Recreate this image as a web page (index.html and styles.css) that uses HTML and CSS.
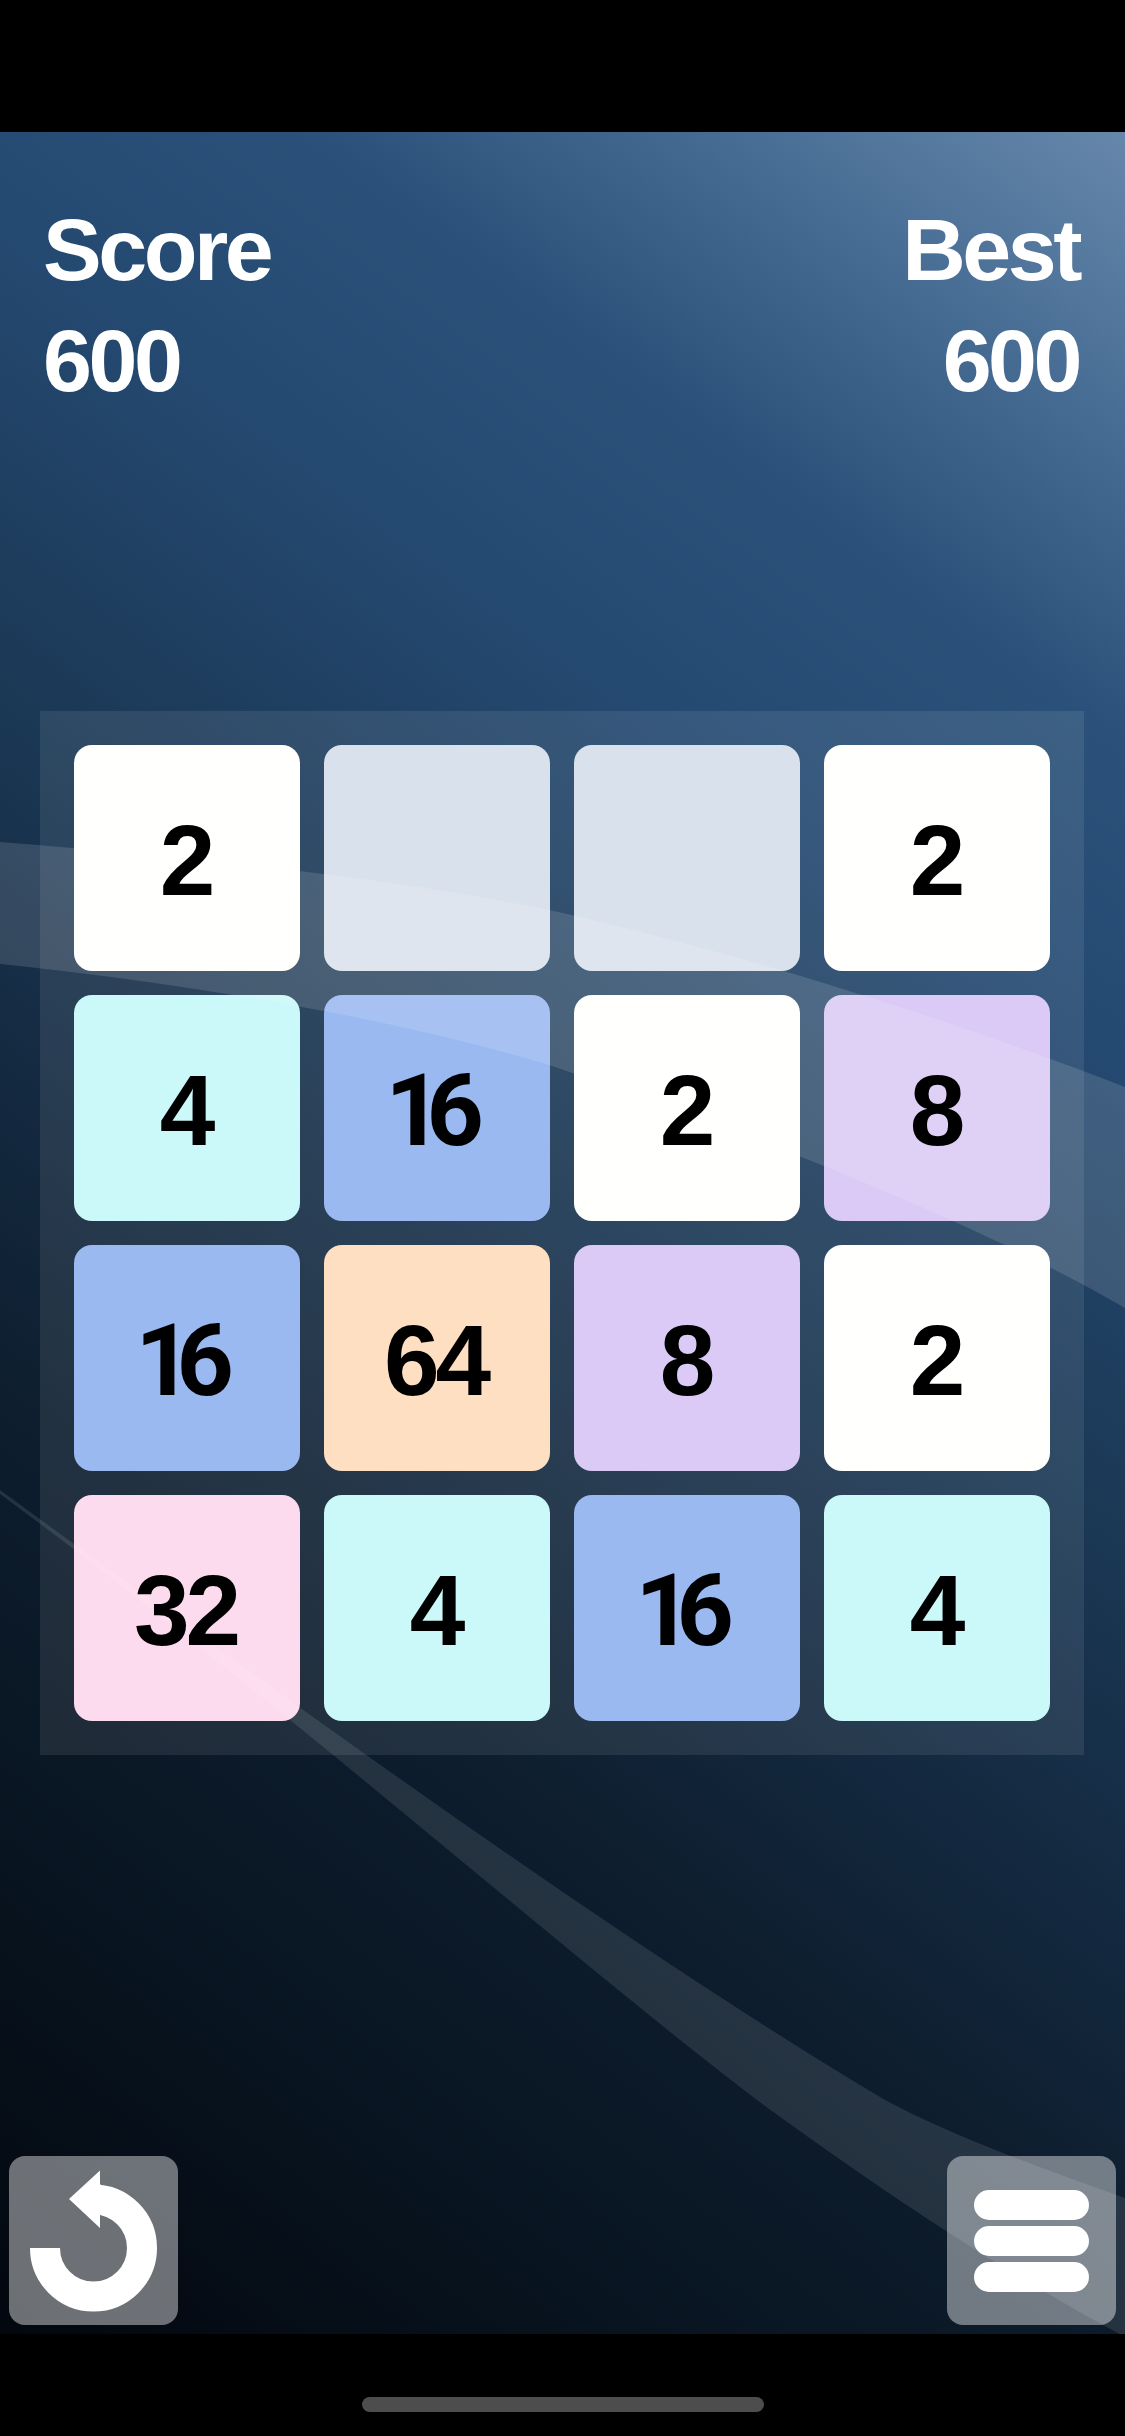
FILE: index.html
```html
<!DOCTYPE html>
<html lang="en">
<head>
<meta charset="utf-8">
<title>2048</title>
<link rel="stylesheet" href="styles.css">
</head>
<body>
<div class="status-bar"></div>
<main class="screen">
  <header class="scores">
    <div class="score-block">
      <div>Score</div>
      <div>600</div>
    </div>
    <div class="score-block score-block-right">
      <div>Best</div>
      <div>600</div>
    </div>
  </header>
  <section class="board">
    <div class="tile t2"><span>2</span></div>
    <div class="tile empty"></div>
    <div class="tile empty"></div>
    <div class="tile t2"><span>2</span></div>
    <div class="tile t4"><span>4</span></div>
    <div class="tile t16"><span>16</span></div>
    <div class="tile t2"><span>2</span></div>
    <div class="tile t8"><span>8</span></div>
    <div class="tile t16"><span>16</span></div>
    <div class="tile t64"><span>64</span></div>
    <div class="tile t8"><span>8</span></div>
    <div class="tile t2"><span>2</span></div>
    <div class="tile t32"><span>32</span></div>
    <div class="tile t4"><span>4</span></div>
    <div class="tile t16"><span>16</span></div>
    <div class="tile t4"><span>4</span></div>
  </section>
  <footer class="controls">
    <button class="ctrl" type="button" aria-label="Undo">
      <svg class="undo-icon" viewBox="0 0 169 169" width="169" height="169">
        <path class="undo-ring" d="M36 92 A48.500 48.500 0 1 0 84.500 43.500 L92 43.500"/>
        <polygon class="undo-head" points="60,43 91,14.500 91,72"/>
      </svg>
    </button>
    <button class="ctrl menu" type="button" aria-label="Menu">
      <span class="bar"></span>
      <span class="bar"></span>
      <span class="bar"></span>
    </button>
  </footer>
  <svg class="swooshes" viewBox="0 132 1125 2202" width="1125" height="2202" aria-hidden="true">
    <path class="swoosh-a" d="M0 842 C200 858 420 880 580 917 C700 945 900 1000 1125 1087 L1125 1308 C1000 1235 800 1150 549 1065 C400 1020 200 985 0 964 Z"/>
    <path class="swoosh-b" d="M0 1490 C250 1672 600 1930 885 2100 C950 2135 1040 2168 1125 2198 L1125 2337 C1000 2270 880 2190 757 2100 C560 1950 280 1700 0 1494 Z"/>
  </svg>
</main>
<div class="home-area"><div class="home-bar"></div></div>
</body>
</html>
```
FILE: styles.css
```css
* { box-sizing: border-box; }

html, body {
  margin: 0;
  padding: 0;
  background: #000;
}

body {
  width: 1125px;
  height: 2436px;
  overflow: hidden;
  font-family: "Liberation Sans", Arial, sans-serif;
  font-weight: 700;
}

.status-bar {
  height: 132px;
  background: #000;
}

.screen {
  position: relative;
  display: flex;
  flex-direction: column;
  height: 2202px;
  background: linear-gradient(217deg,
    #6687aa 0%,
    #4a6f96 9%,
    #2b517a 20%,
    #254a72 30%,
    #1b3855 46%,
    #142a41 58%,
    #0e1e2f 69%,
    #081420 84%,
    #03070e 100%);
}

.scores {
  display: flex;
  justify-content: space-between;
  padding: 62px 46px 0 43px;
  color: #fff;
  font-size: 88px;
  line-height: 111px;
  letter-spacing: -3.500px;
}

.score-block-right { text-align: right; }

.board {
  display: grid;
  grid-template-columns: repeat(4, 226px);
  grid-auto-rows: 226px;
  gap: 24px;
  width: 1044px;
  height: 1044px;
  margin: 295px 0 0 40px;
  padding: 34px;
  background: rgba(255, 255, 255, 0.085);
}

.tile {
  display: flex;
  align-items: center;
  justify-content: center;
  padding: 5px 3px 0 0;
  border-radius: 18px;
  color: #000;
  font-size: 100px;
  letter-spacing: -4px;
}

.tile span {
  position: relative;
  z-index: 2;
}

.empty { background: #d9e2ec; }
.t2 { background: #fffffd; }
.t4 { background: #cbf8f8; }
.t8 { background: #dbcaf5; }
.t16 {
  padding-right: 21px;
  background: #9ab9f0;
  font-family: Roboto, "Liberation Sans", sans-serif;
  letter-spacing: -16px;
}
.t32 { background: #fddbee; }
.t64 { background: #fedfc1; }

.controls {
  display: flex;
  justify-content: space-between;
  margin-top: auto;
  padding: 0 9px 9px;
}

.ctrl {
  display: flex;
  flex-direction: column;
  align-items: center;
  justify-content: center;
  gap: 6px;
  width: 169px;
  height: 169px;
  padding: 0;
  border: 0;
  border-radius: 16px;
  background: rgba(255, 255, 255, 0.42);
}

.undo-icon { display: block; }

.undo-ring {
  fill: none;
  stroke: #fff;
  stroke-width: 30;
}

.undo-head { fill: #fff; }

.bar {
  display: block;
  width: 115px;
  height: 30px;
  border-radius: 15px;
  background: #fff;
}

.swooshes {
  position: absolute;
  top: 0;
  left: 0;
  z-index: 1;
  pointer-events: none;
}

.swoosh-a { fill: rgba(255, 255, 255, 0.13); }
.swoosh-b { fill: rgba(255, 255, 255, 0.1); }

.home-area {
  height: 102px;
  padding-top: 63px;
  background: #000;
}

.home-bar {
  width: 402px;
  height: 15px;
  margin-left: 362px;
  border-radius: 8px;
  background: #4d4d4d;
}
```
